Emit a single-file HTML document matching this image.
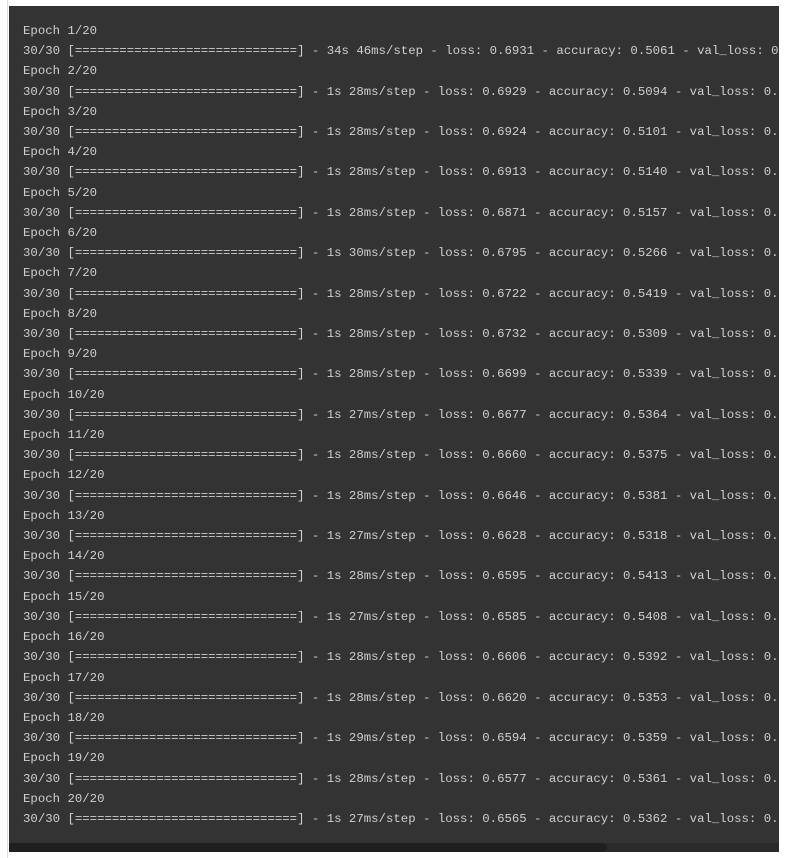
<!DOCTYPE html>
<html><head><meta charset="utf-8"><style>
html,body{margin:0;padding:0;background:#fff;width:789px;height:858px;overflow:hidden}
.lb{position:absolute;left:7px;top:0;width:1px;height:858px;background:#e0e0e0}
.p{position:absolute;left:9px;top:6px;width:770px;height:846px;background:#333333;overflow:hidden}
pre{margin:0;position:absolute;left:14px;top:15px;font-family:"Liberation Mono",monospace;font-size:12.35px;line-height:20.2px;color:#cfcfcf;white-space:pre}
.sb{position:absolute;left:0;top:837px;width:770px;height:9px;background:#2a2a2a}
.th{position:absolute;left:0;top:0;width:598px;height:9px;background:#1f1f1f;border-radius:0 5px 5px 0}
</style></head><body>
<div class="lb"></div>
<div class="p"><pre>Epoch 1/20
30/30 [==============================] - 34s 46ms/step - loss: 0.6931 - accuracy: 0.5061 - val_loss: 0.6
Epoch 2/20
30/30 [==============================] - 1s 28ms/step - loss: 0.6929 - accuracy: 0.5094 - val_loss: 0.6
Epoch 3/20
30/30 [==============================] - 1s 28ms/step - loss: 0.6924 - accuracy: 0.5101 - val_loss: 0.6
Epoch 4/20
30/30 [==============================] - 1s 28ms/step - loss: 0.6913 - accuracy: 0.5140 - val_loss: 0.6
Epoch 5/20
30/30 [==============================] - 1s 28ms/step - loss: 0.6871 - accuracy: 0.5157 - val_loss: 0.6
Epoch 6/20
30/30 [==============================] - 1s 30ms/step - loss: 0.6795 - accuracy: 0.5266 - val_loss: 0.6
Epoch 7/20
30/30 [==============================] - 1s 28ms/step - loss: 0.6722 - accuracy: 0.5419 - val_loss: 0.6
Epoch 8/20
30/30 [==============================] - 1s 28ms/step - loss: 0.6732 - accuracy: 0.5309 - val_loss: 0.6
Epoch 9/20
30/30 [==============================] - 1s 28ms/step - loss: 0.6699 - accuracy: 0.5339 - val_loss: 0.6
Epoch 10/20
30/30 [==============================] - 1s 27ms/step - loss: 0.6677 - accuracy: 0.5364 - val_loss: 0.6
Epoch 11/20
30/30 [==============================] - 1s 28ms/step - loss: 0.6660 - accuracy: 0.5375 - val_loss: 0.6
Epoch 12/20
30/30 [==============================] - 1s 28ms/step - loss: 0.6646 - accuracy: 0.5381 - val_loss: 0.6
Epoch 13/20
30/30 [==============================] - 1s 27ms/step - loss: 0.6628 - accuracy: 0.5318 - val_loss: 0.6
Epoch 14/20
30/30 [==============================] - 1s 28ms/step - loss: 0.6595 - accuracy: 0.5413 - val_loss: 0.6
Epoch 15/20
30/30 [==============================] - 1s 27ms/step - loss: 0.6585 - accuracy: 0.5408 - val_loss: 0.6
Epoch 16/20
30/30 [==============================] - 1s 28ms/step - loss: 0.6606 - accuracy: 0.5392 - val_loss: 0.6
Epoch 17/20
30/30 [==============================] - 1s 28ms/step - loss: 0.6620 - accuracy: 0.5353 - val_loss: 0.6
Epoch 18/20
30/30 [==============================] - 1s 29ms/step - loss: 0.6594 - accuracy: 0.5359 - val_loss: 0.6
Epoch 19/20
30/30 [==============================] - 1s 28ms/step - loss: 0.6577 - accuracy: 0.5361 - val_loss: 0.6
Epoch 20/20
30/30 [==============================] - 1s 27ms/step - loss: 0.6565 - accuracy: 0.5362 - val_loss: 0.6</pre>
<div class="sb"><div class="th"></div></div>
</div>
</body></html>
